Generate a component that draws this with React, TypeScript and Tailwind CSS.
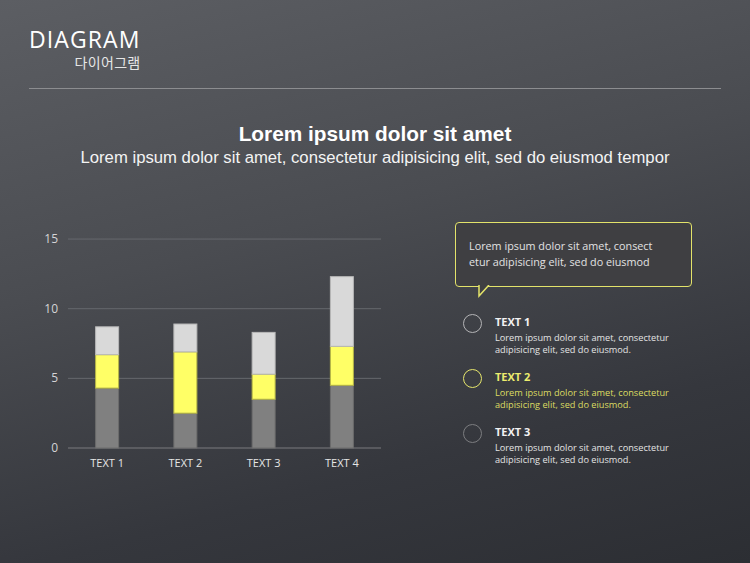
import React from "react";

const categories = ["TEXT 1", "TEXT 2", "TEXT 3", "TEXT 4"];
const series = [
  { values: [4.3, 2.5, 3.5, 4.5], fill: "#808080", stroke: "#6c6c6c" },
  { values: [2.4, 4.4, 1.8, 2.8], fill: "#ffff66", stroke: "#b5b547" },
  { values: [2, 2, 3, 5], fill: "#d9d9d9", stroke: "#b8b8b8" },
];

const items = [
  { title: "TEXT 1", ring: "border-[#b4b4b6]", text: "text-[#f2f2f2]", body: "text-[#e4e4e4]" },
  { title: "TEXT 2", ring: "border-[#e6e66c]", text: "text-[#ecec6e]", body: "text-[#dcdc62]" },
  { title: "TEXT 3", ring: "border-[#7c7d80]", text: "text-[#f2f2f2]", body: "text-[#e4e4e4]" },
];

// plot area in page coordinates
const X0 = 68;
const X1 = 381;
const Y0 = 448;
const UNIT = 13.93;
const BAR_W = 23;

const Chart = () => {
  const step = (X1 - X0) / categories.length;
  return (
    <svg width={360} height={250} viewBox="30 228 360 250" className="shrink-0 mt-[6px]">
      {[0, 5, 10, 15].map((v) => {
        const y = Y0 - v * UNIT;
        return (
          <g key={v}>
            <line x1={X0} x2={X1} y1={y} y2={y} stroke={v === 0 ? "#7a7b7f" : "#66686d"} strokeWidth={1} />
            <text
              x={58}
              y={y + 4}
              textAnchor="end"
              fontSize={12}
              fill="#d4d4d6"
              fontFamily="'Open Sans', sans-serif"
            >
              {v}
            </text>
          </g>
        );
      })}
      {categories.map((c, i) => {
        const cx = X0 + step * (i + 0.5);
        let base = 0;
        return (
          <g key={c}>
            {series.map((s, si) => {
              const v = s.values[i];
              const yTop = Y0 - (base + v) * UNIT;
              const h = v * UNIT;
              base += v;
              return (
                <rect
                  key={si}
                  x={cx - BAR_W / 2}
                  y={yTop}
                  width={BAR_W}
                  height={h}
                  fill={s.fill}
                  stroke={s.stroke}
                  strokeWidth={1}
                />
              );
            })}
            <text
              x={cx}
              y={467}
              textAnchor="middle"
              fontSize={11}
              fill="#e6e6e6"
              fontFamily="'Open Sans', sans-serif"
            >
              {c}
            </text>
          </g>
        );
      })}
    </svg>
  );
};

const App = () => {
  return (
    <div className="w-[750px] h-[563px] overflow-hidden bg-[linear-gradient(165deg,#5c5e63_0%,#4a4c51_40%,#35373d_75%,#2c2e33_100%)] font-['Open_Sans',sans-serif]">
      <header className="pl-[29px] pt-[26px]">
        <div className="inline-flex flex-col items-end">
          <h1 className="text-[23px] leading-[27px] text-white tracking-[1.1px]">DIAGRAM</h1>
          <p className="mt-[1px] text-[14px] leading-[16px] text-[#e6e6e6] font-['Noto_Sans_CJK_KR',sans-serif] tracking-[0.3px]">
            다이어그램
          </p>
        </div>
      </header>
      <div className="mx-[29px] mt-[18px] h-px bg-[#8c8d90]" />

      <div className="mt-[32px] flex flex-col items-center font-['Liberation_Sans',Arial,sans-serif] text-white">
        <h2 className="text-[20.8px] leading-[26px] font-bold">Lorem ipsum dolor sit amet</h2>
        <p className="text-[16.7px] leading-[22px] text-[#f4f4f4]">
          Lorem ipsum dolor sit amet, consectetur adipisicing elit, sed do eiusmod tempor
        </p>
      </div>

      <div className="mt-[53px] flex items-start pl-[30px] gap-[65px]">
        <Chart />

        <div className="w-[237px] flex flex-col">
          <div className="relative">
            <div className="h-[65px] rounded-[4px] border-[1.5px] border-[#e3e36a] bg-[#3f3f42] px-[13px] pt-[15px] text-[10.8px] leading-[16px] text-[#e2e2e2]">
              <p>Lorem ipsum dolor sit amet, consect</p>
              <p>etur adipisicing elit, sed do eiusmod</p>
            </div>
            <svg width={14} height={14} viewBox="0 0 14 14" className="absolute left-[23px] top-[63px]">
              <polygon points="1,0 11,0 1,11" fill="#3f3f42" />
              <polyline points="1,0 1,11 11,0" fill="none" stroke="#e3e36a" strokeWidth={1.5} />
            </svg>
          </div>

          <ul className="mt-[28px] flex flex-col gap-[14px]">
            {items.map((it) => (
              <li key={it.title} className="flex items-start gap-[13px] pl-[8px]">
                <span className={`mt-[-1px] w-[19px] h-[19px] rounded-full border-[1.5px] shrink-0 ${it.ring}`} />
                <div>
                  <p className={`text-[11px] leading-[14px] font-bold ${it.text}`}>{it.title}</p>
                  <p className={`mt-[3px] text-[9.2px] leading-[12px] ${it.body}`}>
                    Lorem ipsum dolor sit amet, consectetur
                    <br />
                    adipisicing elit, sed do eiusmod.
                  </p>
                </div>
              </li>
            ))}
          </ul>
        </div>
      </div>
    </div>
  );
};

export default App;
